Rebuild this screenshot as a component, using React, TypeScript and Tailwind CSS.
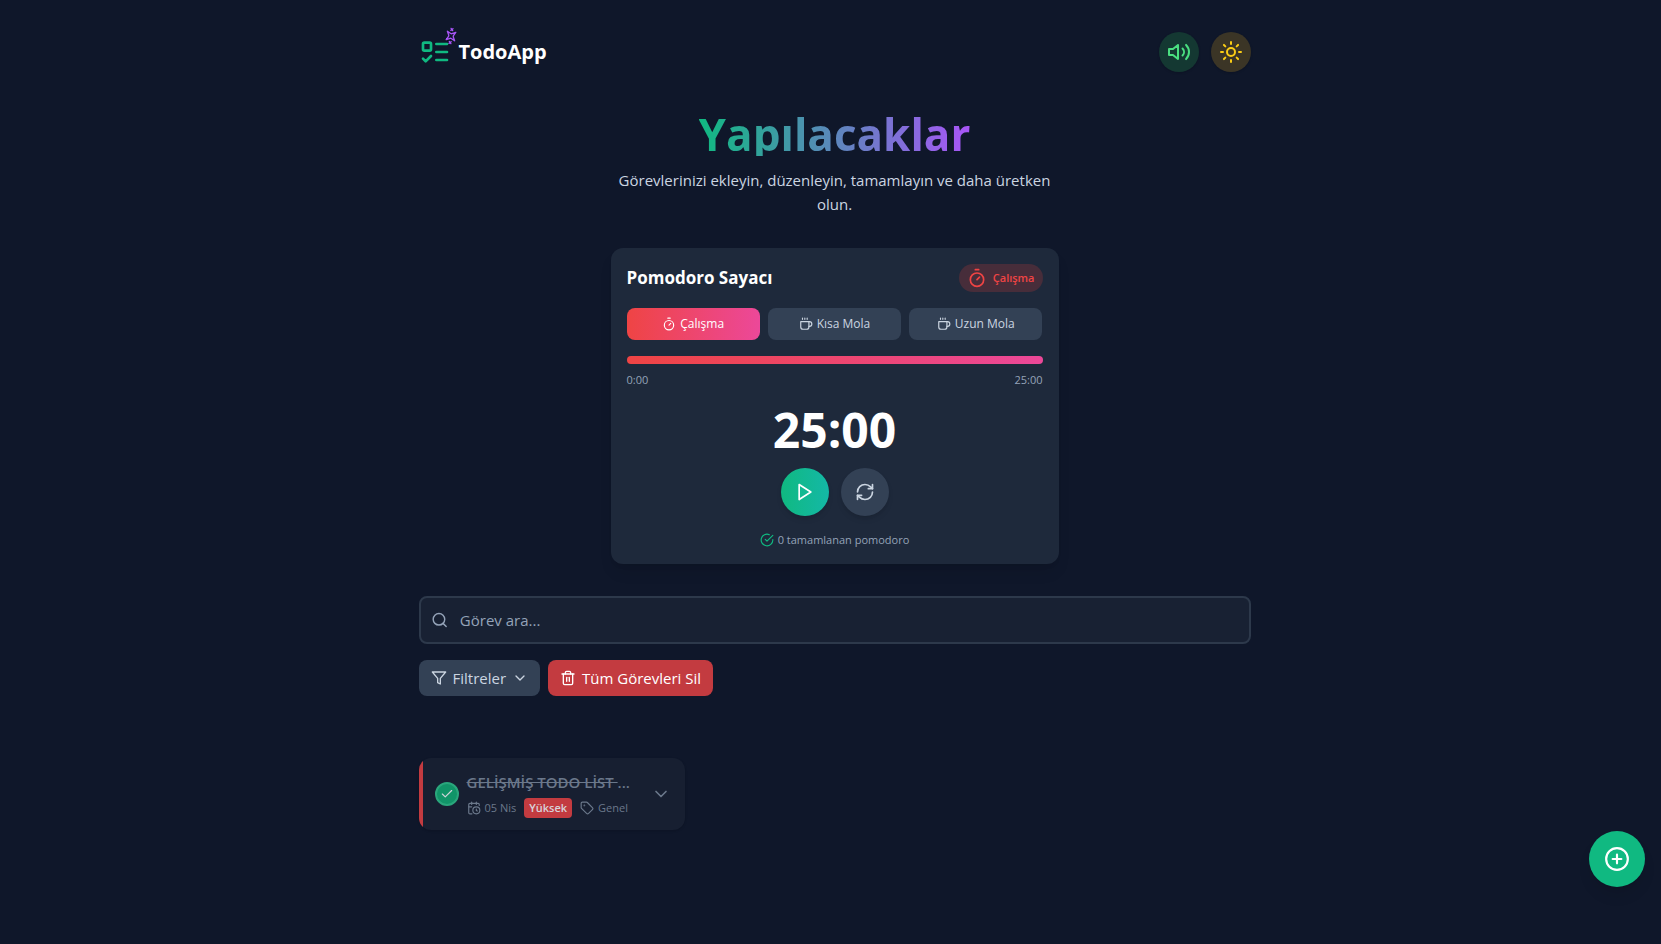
import { useState, type ReactNode } from "react";
import { CalendarClock, Check, ChevronDown, CirclePlus, RefreshCw, Search, Sun, Tag, Timer, Trash2 } from "lucide-react";

type IconProps = { className?: string };

function Icon({ className, children }: { className?: string; children: ReactNode }) {
  return (
    <svg
      viewBox="0 0 24 24"
      fill="none"
      stroke="currentColor"
      strokeWidth="2"
      strokeLinecap="round"
      strokeLinejoin="round"
      className={className}
      aria-hidden="true"
    >
      {children}
    </svg>
  );
}

function SparklesIcon({ className }: IconProps) {
  return (
    <Icon className={className}>
      <path d="m12 3-1.912 5.813a2 2 0 0 1-1.275 1.275L3 12l5.813 1.912a2 2 0 0 1 1.275 1.275L12 21l1.912-5.813a2 2 0 0 1 1.275-1.275L21 12l-5.813-1.912a2 2 0 0 1-1.275-1.275L12 3Z" />
      <path d="M5 3v4M19 17v4M3 5h4M17 19h4" />
    </Icon>
  );
}

function ListIcon({ className }: IconProps) {
  return (
    <Icon className={className}>
      <rect x="3" y="5" width="6" height="6" rx="1" />
      <path d="m3 17 2 2 4-4M13 6h8M13 12h8M13 18h8" />
    </Icon>
  );
}

function VolumeIcon({ className }: IconProps) {
  return (
    <Icon className={className}>
      <polygon points="11 5 6 9 2 9 2 15 6 15 11 19 11 5" />
      <path d="M15.54 8.46a5 5 0 0 1 0 7.07" />
      <path d="M19.07 4.93a10 10 0 0 1 0 14.14" />
    </Icon>
  );
}

function FilterIcon({ className }: IconProps) {
  return (
    <Icon className={className}>
      <polygon points="22 3 2 3 10 12.46 10 19 14 21 14 12.46 22 3" />
    </Icon>
  );
}

function CoffeeIcon({ className }: IconProps) {
  return (
    <Icon className={className}>
      <path d="M17 8h1a4 4 0 1 1 0 8h-1" />
      <path d="M3 8h14v9a4 4 0 0 1-4 4H7a4 4 0 0 1-4-4Z" />
      <path d="M6 2v2M10 2v2M14 2v2" />
    </Icon>
  );
}

function PlayIcon({ className }: IconProps) {
  return (
    <Icon className={className}>
      <polygon points="5 3 19 12 5 21 5 3" />
    </Icon>
  );
}

function DoneIcon({ className }: IconProps) {
  return (
    <Icon className={className}>
      <path d="M22 11.08V12a10 10 0 1 1-5.93-9.14" />
      <path d="m9 11 3 3L22 4" />
    </Icon>
  );
}

function Header() {
  return (
    <header className="flex items-center justify-between">
      <a href="#" className="flex items-center gap-2">
        <span className="relative">
          <ListIcon className="size-8 text-[#10b981]" />
          <SparklesIcon className="absolute -top-2 -right-2 size-4 rotate-[53deg] text-[#a855f7]" />
        </span>
        <span className="text-xl font-bold text-white">TodoApp</span>
      </a>
      <div className="flex gap-3">
        <button
          type="button"
          aria-label="Ses"
          className="flex size-10 items-center justify-center rounded-full bg-[#143832] text-[#4ade80] shadow-sm"
        >
          <VolumeIcon className="size-6" />
        </button>
        <button
          type="button"
          aria-label="Tema"
          className="flex size-10 items-center justify-center rounded-full bg-[#3b3526] text-[#facc15] shadow-sm"
        >
          <Sun className="size-6" />
        </button>
      </div>
    </header>
  );
}

const modes = [
  { id: "work", label: "Çalışma", ModeIcon: Timer },
  { id: "short", label: "Kısa Mola", ModeIcon: CoffeeIcon },
  { id: "long", label: "Uzun Mola", ModeIcon: CoffeeIcon },
];

function Pomodoro() {
  const [mode, setMode] = useState("work");
  return (
    <section className="mx-auto mt-8 w-full max-w-md rounded-xl bg-[#1e293b] p-4 shadow-lg">
      <div className="flex items-center justify-between">
        <h2 className="text-[17px] leading-7 font-bold text-white">Pomodoro Sayacı</h2>
        <span className="flex h-7 items-center gap-1.5 rounded-full bg-[#472d3a] px-2 text-[11px] font-semibold text-[#ef4444]">
          <Timer className="size-5" />
          Çalışma
        </span>
      </div>
      <div className="mt-4 grid grid-cols-3 gap-2">
        {modes.map(({ id, label, ModeIcon }) => (
          <button
            key={id}
            type="button"
            onClick={() => setMode(id)}
            className={
              mode === id
                ? "flex h-8 items-center justify-center gap-1 rounded-lg bg-linear-to-r/srgb from-[#ef4444] to-[#ec4899] text-xs font-medium text-white"
                : "flex h-8 items-center justify-center gap-1 rounded-lg bg-[#334155] text-xs font-medium text-[#cbd5e1]"
            }
          >
            <ModeIcon className="size-3.5" />
            {label}
          </button>
        ))}
      </div>
      <div className="mt-4 h-2 rounded-full bg-linear-to-r/srgb from-[#ef4444] to-[#ec4899]" />
      <div className="mt-2 flex justify-between text-[11px] leading-4 text-[#94a3b8]">
        <span>0:00</span>
        <span>25:00</span>
      </div>
      <p className="mt-[18px] text-center text-5xl font-bold text-white">25:00</p>
      <div className="mt-3.5 flex justify-center gap-3">
        <button
          type="button"
          aria-label="Başlat"
          className="flex size-12 items-center justify-center rounded-full bg-linear-to-r/srgb from-[#10b981] to-[#14b8a6] text-white shadow-md"
        >
          <PlayIcon className="size-5" />
        </button>
        <button
          type="button"
          aria-label="Sıfırla"
          className="flex size-12 items-center justify-center rounded-full bg-[#334155] text-[#cbd5e1] shadow-md"
        >
          <RefreshCw className="size-5" />
        </button>
      </div>
      <p className="mt-4 flex items-center justify-center gap-1 text-[11px] leading-4 text-[#94a3b8]">
        <DoneIcon className="size-3.5 text-[#10b981]" />
        0 tamamlanan pomodoro
      </p>
    </section>
  );
}

function Toolbar() {
  return (
    <section className="mt-8">
      <label className="flex h-12 items-center gap-3 rounded-lg border-2 border-[#2d394b] bg-[#182133] px-2.5 text-[#94a3b8]">
        <Search className="size-[18px]" />
        <input
          type="search"
          aria-label="Görev ara"
          placeholder="Görev ara..."
          className="w-full bg-transparent text-[15px] leading-6 text-white outline-none placeholder:text-[#94a3b8]"
        />
      </label>
      <div className="mt-4 flex gap-2">
        <button
          type="button"
          className="flex h-9 items-center gap-1.5 rounded-lg bg-[#334155] px-3 text-[15px] text-[#cbd5e1]"
        >
          <FilterIcon className="size-4" />
          Filtreler
          <ChevronDown className="size-4" />
        </button>
        <button
          type="button"
          className="flex h-9 items-center gap-1.5 rounded-lg bg-[#c33b40] px-3 text-[15px] font-medium text-white"
        >
          <Trash2 className="size-4" />
          Tüm Görevleri Sil
        </button>
      </div>
    </section>
  );
}

function TaskCard() {
  return (
    <article className="mt-[62px] flex w-[266px] overflow-hidden rounded-xl bg-[#171f31] shadow-sm">
      <div className="w-1 shrink-0 bg-[#c33b40]" />
      <div className="flex min-w-0 flex-1 items-center gap-2 py-2.5 pr-3.5 pl-3">
        <button
          type="button"
          aria-label="Tamamlandı"
          className="flex size-6 shrink-0 items-center justify-center rounded-full border-2 border-[#2aa67c] bg-[#119468] text-[#d0d4da]"
        >
          <Check className="size-3.5" />
        </button>
        <div className="min-w-0 flex-1">
          <h3 className="text-[15px] leading-7 font-semibold whitespace-nowrap text-[#6b788b]">
            <span className="whitespace-pre line-through">GELİŞMİŞ TODO LİST </span>...
          </h3>
          <div className="flex h-6 items-center gap-2 text-[11px] text-[#6b788b]">
            <span className="flex items-center gap-1">
              <CalendarClock className="size-3.5" />
              05 Nis
            </span>
            <span className="rounded bg-[#c33b40] px-[5px] py-0.5 text-[11px] leading-4 font-semibold text-[#d9d3da]">
              Yüksek
            </span>
            <span className="flex items-center gap-1">
              <Tag className="size-3.5" />
              Genel
            </span>
          </div>
        </div>
        <button type="button" aria-label="Ayrıntılar" className="shrink-0 text-[#6b788b]">
          <ChevronDown className="size-5" />
        </button>
      </div>
    </article>
  );
}

export default function App() {
  return (
    <div className="min-h-screen bg-[#0f172a] pl-2 font-['Open_Sans','Noto_Sans',sans-serif]">
      <main className="mx-auto max-w-4xl px-8 py-8">
        <Header />
        <div className="mx-auto mt-10 max-w-md text-center">
          <h1 className="mx-auto w-fit bg-linear-to-r/srgb from-[#10b981] to-[#a855f7] bg-clip-text text-[44px] leading-11 font-bold text-transparent">
            Yapılacaklar
          </h1>
          <p className="mt-3 text-[15px] leading-6 text-[#cbd5e1]">
            Görevlerinizi ekleyin, düzenleyin, tamamlayın ve daha üretken olun.
          </p>
        </div>
        <Pomodoro />
        <Toolbar />
        <TaskCard />
      </main>
      <button
        type="button"
        aria-label="Görev ekle"
        className="fixed right-4 bottom-[57px] flex size-14 items-center justify-center rounded-full bg-[#10b981] text-white shadow-lg"
      >
        <CirclePlus className="size-[26px]" />
      </button>
    </div>
  );
}
